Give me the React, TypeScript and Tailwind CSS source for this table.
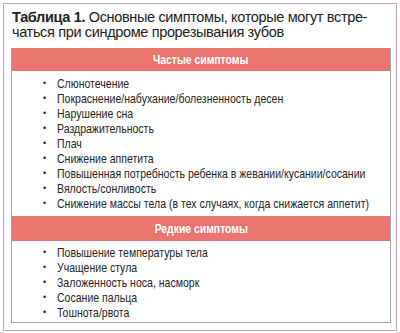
import React from 'react';

const frequent = [
  'Слюнотечение',
  'Покраснение/набухание/болезненность десен',
  'Нарушение сна',
  'Раздражительность',
  'Плач',
  'Снижение аппетита',
  'Повышенная потребность ребенка в жевании/кусании/сосании',
  'Вялость/сонливость',
  'Снижение массы тела (в тех случаях, когда снижается аппетит)',
];

const rare = [
  'Повышение температуры тела',
  'Учащение стула',
  'Заложенность носа, насморк',
  'Сосание пальца',
  'Тошнота/рвота',
];

const sans = { fontFamily: '"Liberation Sans", Arial, sans-serif' };

function SymptomList({ items, pt, pb }: { items: string[]; pt: string; pb: string }) {
  return (
    <ul className={`${pt} ${pb} pl-[31px]`} style={sans}>
      {items.map((item) => (
        <li key={item} className="flex items-center h-[15px] text-[13px] leading-[15px] text-[#252525]">
          <span className="w-[14px] shrink-0 text-[9px]">•</span>
          <span className="inline-block shrink-0 whitespace-nowrap origin-left scale-x-[0.81]">{item}</span>
        </li>
      ))}
    </ul>
  );
}

function SectionHeader({ title, h }: { title: string; h: string }) {
  return (
    <div
      className={`${h} bg-[#ea746e] flex items-center justify-center text-white font-bold text-[13px]`}
      style={sans}
    >
      <span className="inline-block whitespace-nowrap scale-x-[0.8]">{title}</span>
    </div>
  );
}

export default function App() {
  return (
    <div className="w-[400px] h-[333px] bg-white pt-[3px] pl-[3px]">
      <div className="w-[394px] h-[328px] border border-[#c9a4a4] pl-[7px]">
        <div
          className="pt-[6px] pl-[1px] text-[14.5px] leading-[15px] tracking-[-0.35px] text-[#222] whitespace-nowrap"
          style={sans}
        >
          <div>
            <b>Таблица 1.</b> Основные симптомы, которые могут встре-
          </div>
          <div>чаться при синдроме прорезывания зубов</div>
        </div>
        <div className="mt-[8px] w-[380px] border-x border-b border-[#a4a4ac]">
          <SectionHeader title="Частые симптомы" h="h-[23px]" />
          <SymptomList items={frequent} pt="pt-[5px]" pb="pb-[5px]" />
          <SectionHeader title="Редкие симптомы" h="h-[25px]" />
          <SymptomList items={rare} pt="pt-[4px]" pb="pb-[2px]" />
        </div>
      </div>
    </div>
  );
}
